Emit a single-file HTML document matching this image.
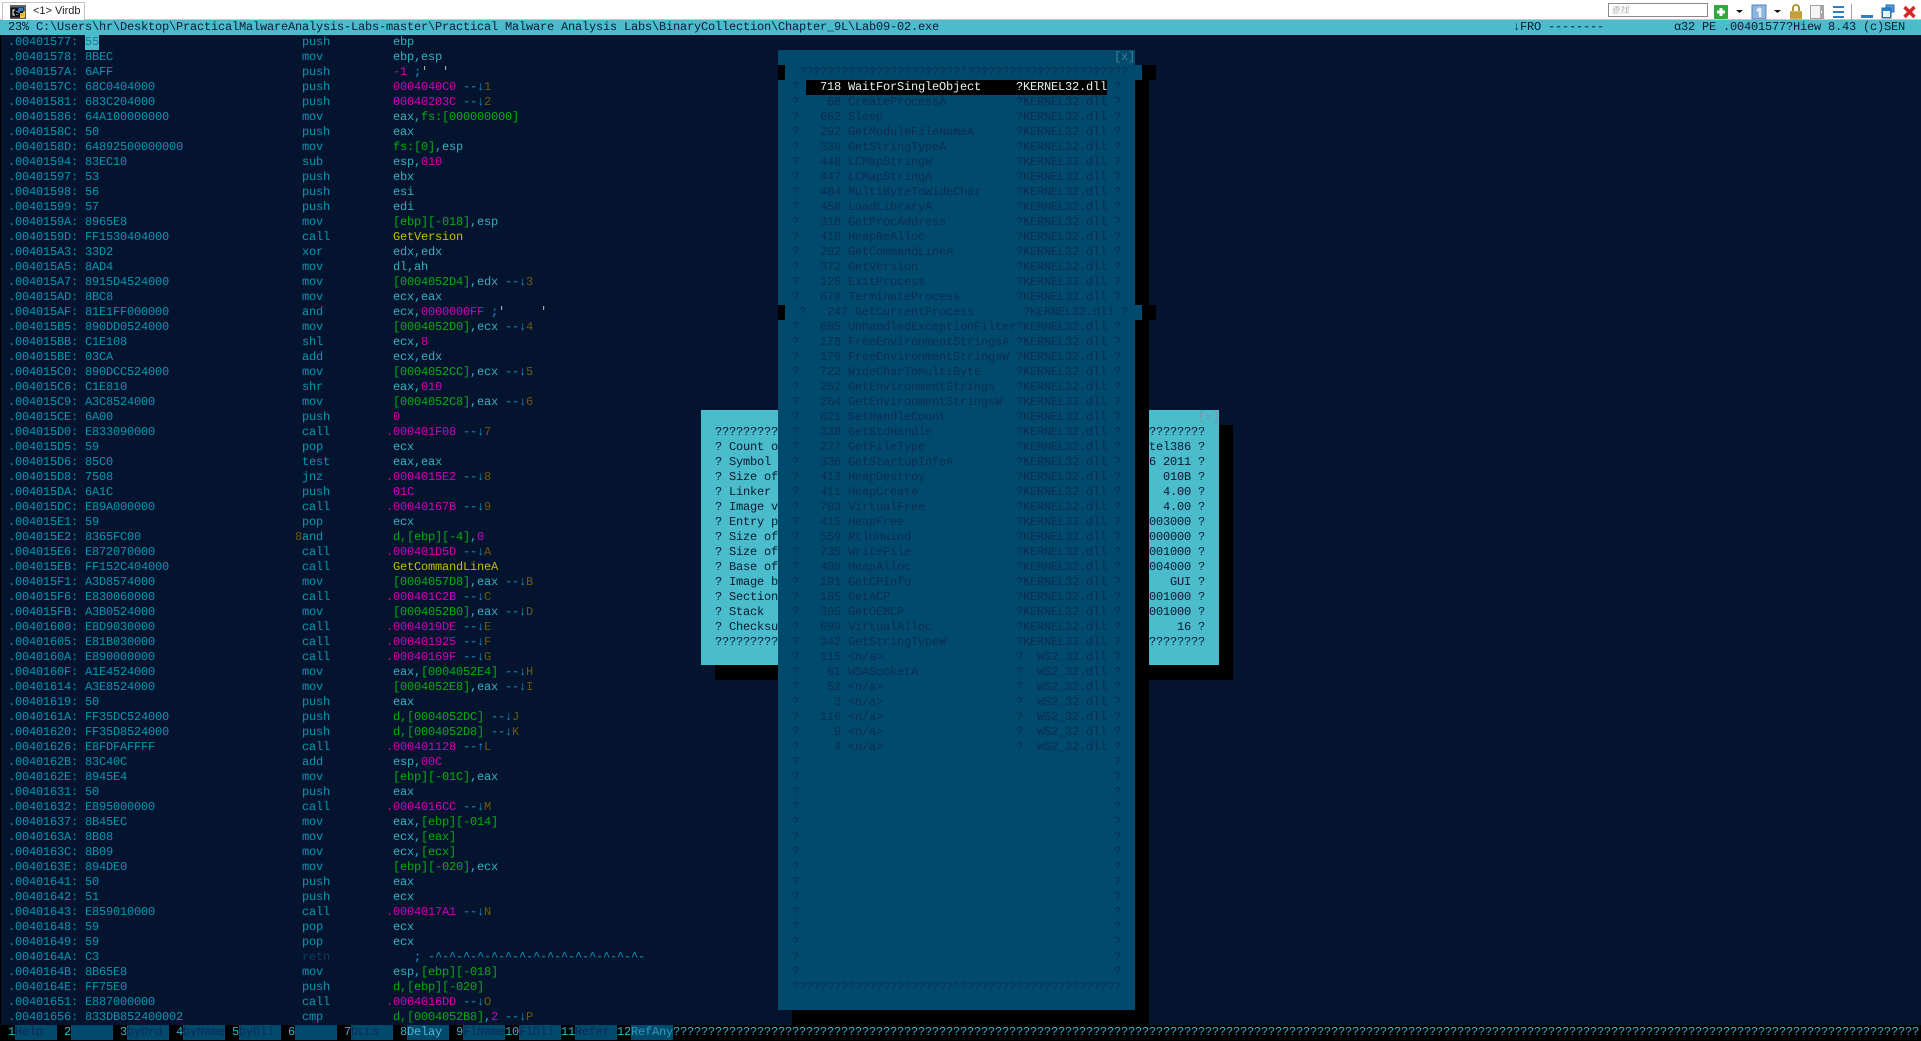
<!DOCTYPE html>
<html><head><meta charset="utf-8"><title>Virdb</title>
<style>
html,body{margin:0;padding:0;width:1921px;height:1041px;overflow:hidden;background:#05142e}
pre{position:absolute;margin:0;font:12px/15px "Liberation Mono","DejaVu Sans Mono",monospace;letter-spacing:-.2012px;text-rendering:geometricPrecision;font-kerning:none;white-space:pre}
.b{position:absolute}
.r{color:#35aebf}.g{color:#00ad10}.p{color:#cf00bd}.y{color:#c4bc00}.c{color:#0a9cc4}.o{color:#6b5a12}.q{color:#b8c0a8}.n{color:#e6f2f2}
</style></head><body>
<div class="b" style="left:0;top:0;width:1921px;height:20px;background:#fff"></div>
<div class="b" style="left:0;top:19px;width:1921px;height:1px;background:#c8c8c8"></div>
<div class="b" style="left:2px;top:2px;width:83px;height:18px;background:#fff;border:1px solid #c4c4c4;border-bottom:0;box-sizing:border-box"></div>
<svg class="b" style="left:10px;top:5px" width="17" height="15" viewBox="0 0 17 15"><rect x="0" y="0" width="16" height="14" fill="#5a6470"/><rect x="0.5" y="2.5" width="13" height="10" fill="#111"/><path d="M5 5H3v5h2M7 6v1M7 9v1" stroke="#fff" stroke-width="1" fill="none"/><path d="M9 3h4v3h-3v2H8V5a2 2 0 0 1 1-2z" fill="#3a78c8"/><path d="M15 6v5a2 2 0 0 1-2 2h-3v-3h3V7z" fill="#f2c93a"/><path d="M10 8h4v3h-4z" fill="#e8b82c"/></svg>
<div class="b" style="left:33px;top:4px;font:11px/14px 'Liberation Sans',sans-serif;color:#222">&lt;1&gt; Virdb</div>

<div class="b" style="left:1608px;top:3px;width:100px;height:14px;border:1px solid #8a8a8a;outline:0;box-sizing:border-box;background:#fff"></div>
<div class="b" style="left:1611px;top:4px;font:italic 9px/12px 'Liberation Sans','Noto Sans CJK SC',sans-serif;color:#b0b0b0">查找</div>
<svg class="b" style="left:1712px;top:3px" width="205" height="17" viewBox="0 0 205 17">
<rect x="2" y="2" width="14" height="14" rx="1" fill="#2fa83c"/><path d="M9 5v8M5 9h8" stroke="#fff" stroke-width="3"/>
<path d="M24 7h7l-3.500 3z" fill="#111"/>
<rect x="40" y="2" width="14" height="14" fill="#8fb6de" stroke="#4f86c0"/><path d="M48 5v9M45 8l3-3" stroke="#e8f2fb" stroke-width="2.500" fill="none"/>
<path d="M62 7h7l-3.500 3z" fill="#111"/>
<path d="M81 8V5a3 3 0 0 1 6 0v3" fill="none" stroke="#b09238" stroke-width="2"/><rect x="78" y="8" width="12" height="9" fill="#d9b04c"/><path d="M78 10h12M78 12h12M78 14h12" stroke="#b08a30"/>
<rect x="98.500" y="2.500" width="13" height="13" fill="#f4f4f4" stroke="#a0a0a0"/><rect x="108" y="3" width="3" height="12" fill="#a8a8a8"/><rect x="109" y="8" width="1" height="2" fill="#fff"/>
<path d="M121 4h11M121 9h11M121 14h11" stroke="#2a7fc8" stroke-width="2"/>
<path d="M139.500 1v16" stroke="#a0a0a0"/>
<rect x="149" y="12" width="12" height="3" fill="#2a7fc8"/>
<rect x="174" y="2" width="8" height="7" fill="#5a9ad8" stroke="#1f6cb0"/><rect x="170" y="5" width="9" height="10" fill="#2a7fc8" stroke="#1f6cb0"/><rect x="171" y="8" width="7" height="6" fill="#e8f2fb"/>
<path d="M192.500 4l10 10M202.500 4l-10 10" stroke="#d02a2a" stroke-width="3.500"/>
</svg>

<div class="b" style="left:0;top:20px;width:1921px;height:15px;background:#4bbccc"></div>
<pre style="left:1px;top:20px;color:#0a1c34"> 23% C:\Users\hr\Desktop\PracticalMalwareAnalysis-Labs-master\Practical Malware Analysis Labs\BinaryCollection\Chapter_9L\Lab09-02.exe</pre>
<pre style="left:1513px;top:20px;color:#0a1c34">↓FRO --------</pre>
<pre style="left:1674px;top:20px;color:#0a1c34">α32 PE .00401577?Hiew 8.43 (c)SEN</pre>

<div class="b" style="left:0;top:35px;width:1px;height:1006px;background:#000"></div>
<div class="b" style="left:85px;top:35px;width:14px;height:15px;background:#4bbccc"></div>

<pre style="left:1px;top:35px;color:#0496b2"> .00401577: <span style="color:#1c7f9b">55</span>
 .00401578: 8BEC
 .0040157A: 6AFF
 .0040157C: 68C0404000
 .00401581: 683C204000
 .00401586: 64A100000000
 .0040158C: 50
 .0040158D: 64892500000000
 .00401594: 83EC10
 .00401597: 53
 .00401598: 56
 .00401599: 57
 .0040159A: 8965E8
 .0040159D: FF1530404000
 .004015A3: 33D2
 .004015A5: 8AD4
 .004015A7: 8915D4524000
 .004015AD: 8BC8
 .004015AF: 81E1FF000000
 .004015B5: 890DD0524000
 .004015BB: C1E108
 .004015BE: 03CA
 .004015C0: 890DCC524000
 .004015C6: C1E810
 .004015C9: A3C8524000
 .004015CE: 6A00
 .004015D0: E833090000
 .004015D5: 59
 .004015D6: 85C0
 .004015D8: 7508
 .004015DA: 6A1C
 .004015DC: E89A000000
 .004015E1: 59
 .004015E2: 8365FC00
 .004015E6: E872070000
 .004015EB: FF152C404000
 .004015F1: A3D8574000
 .004015F6: E830060000
 .004015FB: A3B0524000
 .00401600: E8D9030000
 .00401605: E81B030000
 .0040160A: E890000000
 .0040160F: A1E4524000
 .00401614: A3E8524000
 .00401619: 50
 .0040161A: FF35DC524000
 .00401620: FF35D8524000
 .00401626: E8FDFAFFFF
 .0040162B: 83C40C
 .0040162E: 8945E4
 .00401631: 50
 .00401632: E895000000
 .00401637: 8B45EC
 .0040163A: 8B08
 .0040163C: 8B09
 .0040163E: 894DE0
 .00401641: 50
 .00401642: 51
 .00401643: E859010000
 .00401648: 59
 .00401649: 59
 .0040164A: C3
 .0040164B: 8B65E8
 .0040164E: FF75E0
 .00401651: E887000000
 .00401656: 833DB852400002</pre>

<pre style="left:295px;top:35px;color:#0496b2"> push
 mov
 push
 push
 push
 mov
 push
 mov
 sub
 push
 push
 push
 mov
 call
 xor
 mov
 mov
 mov
 and
 mov
 shl
 add
 mov
 shr
 mov
 push
 call
 pop
 test
 jnz
 push
 call
 pop
<span class="o">8</span>and
 call
 call
 mov
 call
 mov
 call
 call
 call
 mov
 mov
 push
 push
 push
 call
 add
 mov
 push
 call
 mov
 mov
 mov
 mov
 push
 push
 call
 pop
 pop
 <span style="color:#0b3d5c">retn</span>
 mov
 push
 call
 cmp</pre>

<pre class="r" style="left:386px;top:35px"> ebp
 ebp,esp
 <span class="p">-1</span> <span class="c">;</span><span class="q">'</span>  <span class="q">'</span>
 <span class="p">0004040C0</span> <span class="c">--↓</span><span class="o">1</span>
 <span class="p">00040203C</span> <span class="c">--↓</span><span class="o">2</span>
 eax,<span class="g">fs:[000000000]</span>
 eax
 <span class="g">fs:[0]</span>,esp
 esp,<span class="p">010</span>
 ebx
 esi
 edi
 <span class="g">[ebp][-018]</span>,esp
 <span class="y">GetVersion</span>
 edx,edx
 dl,ah
 <span class="g">[0004052D4]</span>,edx <span class="c">--↓</span><span class="o">3</span>
 ecx,eax
 ecx,<span class="p">0000000FF</span> <span class="c">;</span><span class="q">'</span>     <span class="q">'</span>
 <span class="g">[0004052D0]</span>,ecx <span class="c">--↓</span><span class="o">4</span>
 ecx,<span class="p">8</span>
 ecx,edx
 <span class="g">[0004052CC]</span>,ecx <span class="c">--↓</span><span class="o">5</span>
 eax,<span class="p">010</span>
 <span class="g">[0004052C8]</span>,eax <span class="c">--↓</span><span class="o">6</span>
 <span class="p">0</span>
<span class="p">.000401F08</span> <span class="c">--↓</span><span class="o">7</span>
 ecx
 eax,eax
<span class="p">.0004015E2</span> <span class="c">--↓</span><span class="o">8</span>
 <span class="p">01C</span>
<span class="p">.00040167B</span> <span class="c">--↓</span><span class="o">9</span>
 ecx
 <span class="g">d,[ebp][-4]</span>,<span class="p">0</span>
<span class="p">.000401D5D</span> <span class="c">--↓</span><span class="o">A</span>
 <span class="y">GetCommandLineA</span>
 <span class="g">[0004057D8]</span>,eax <span class="c">--↓</span><span class="o">B</span>
<span class="p">.000401C2B</span> <span class="c">--↓</span><span class="o">C</span>
 <span class="g">[0004052B0]</span>,eax <span class="c">--↓</span><span class="o">D</span>
<span class="p">.0004019DE</span> <span class="c">--↓</span><span class="o">E</span>
<span class="p">.000401925</span> <span class="c">--↓</span><span class="o">F</span>
<span class="p">.00040169F</span> <span class="c">--↓</span><span class="o">G</span>
 eax,<span class="g">[0004052E4]</span> <span class="c">--↓</span><span class="o">H</span>
 <span class="g">[0004052E8]</span>,eax <span class="c">--↓</span><span class="o">I</span>
 eax
 <span class="g">d,[0004052DC]</span> <span class="c">--↓</span><span class="o">J</span>
 <span class="g">d,[0004052D8]</span> <span class="c">--↓</span><span class="o">K</span>
<span class="p">.000401128</span> <span class="c">--↑</span><span class="o">L</span>
 esp,<span class="p">00C</span>
 <span class="g">[ebp][-01C]</span>,eax
 eax
<span class="p">.0004016CC</span> <span class="c">--↓</span><span class="o">M</span>
 eax,<span class="g">[ebp][-014]</span>
 ecx,<span class="g">[eax]</span>
 ecx,<span class="g">[ecx]</span>
 <span class="g">[ebp][-020]</span>,ecx
 eax
 ecx
<span class="p">.0004017A1</span> <span class="c">--↓</span><span class="o">N</span>
 ecx
 ecx
    <span class="c">; -^-^-^-^-^-^-^-^-^-^-^-^-^-^-^-</span>
 esp,<span class="g">[ebp][-018]</span>
 <span class="g">d,[ebp][-020]</span>
<span class="p">.0004016DD</span> <span class="c">--↓</span><span class="o">O</span>
 <span class="g">d,[0004052B8]</span>,<span class="p">2</span> <span class="c">--↓</span><span class="o">P</span></pre>

<div class="b" style="left:1219px;top:425px;width:14px;height:255px;background:#000"></div>
<div class="b" style="left:715px;top:665px;width:518px;height:15px;background:#000"></div>
<div class="b" style="left:701px;top:410px;width:518px;height:255px;background:#4bbccc"></div>
<pre style="left:1198px;top:410px;color:#6f9ea8">[x]</pre>
<pre style="left:715px;top:425px;color:#081a30">?????????
? Count o
? Symbol 
? Size of
? Linker 
? Image v
? Entry p
? Size of
? Size of
? Base of
? Image b
? Section
? Stack  
? Checksu
?????????</pre>
<pre style="left:1149px;top:425px;color:#081a30">????????
tel386 ?
6 2011 ?
  010B ?
  4.00 ?
  4.00 ?
003000 ?
000000 ?
001000 ?
004000 ?
   GUI ?
001000 ?
001000 ?
    16 ?
????????</pre>

<div class="b" style="left:1135px;top:80px;width:14px;height:945px;background:#000"></div>
<div class="b" style="left:792px;top:1010px;width:357px;height:15px;background:#000"></div>
<div class="b" style="left:778px;top:50px;width:357px;height:960px;background:#004a6e"></div>
<div class="b" style="left:778px;top:65px;width:7px;height:15px;background:#000"></div>
<div class="b" style="left:785px;top:65px;width:357px;height:15px;background:#004a6e"></div>
<div class="b" style="left:1142px;top:65px;width:14px;height:15px;background:#000"></div>
<div class="b" style="left:778px;top:305px;width:7px;height:15px;background:#000"></div>
<div class="b" style="left:785px;top:305px;width:357px;height:15px;background:#004a6e"></div>
<div class="b" style="left:1142px;top:305px;width:14px;height:15px;background:#000"></div>
<div class="b" style="left:806px;top:80px;width:301px;height:15px;background:#000"></div>
<pre style="left:778px;top:50px;color:#0d2c52">                                                <span style="color:#4a7c94">[x]</span>
   ???????????????????????*???????????????????????
  ?   <span class="n">718 WaitForSingleObject     ?KERNEL32.dll</span> ?
  ?    68 CreateProcessA          ?KERNEL32.dll ?
  ?   662 Sleep                   ?KERNEL32.dll ?
  ?   292 GetModuleFileNameA      ?KERNEL32.dll ?
  ?   339 GetStringTypeA          ?KERNEL32.dll ?
  ?   448 LCMapStringW            ?KERNEL32.dll ?
  ?   447 LCMapStringA            ?KERNEL32.dll ?
  ?   484 MultiByteToWideChar     ?KERNEL32.dll ?
  ?   450 LoadLibraryA            ?KERNEL32.dll ?
  ?   318 GetProcAddress          ?KERNEL32.dll ?
  ?   418 HeapReAlloc             ?KERNEL32.dll ?
  ?   202 GetCommandLineA         ?KERNEL32.dll ?
  ?   372 GetVersion              ?KERNEL32.dll ?
  ?   125 ExitProcess             ?KERNEL32.dll ?
  ?   670 TerminateProcess        ?KERNEL32.dll ?
   ?   247 GetCurrentProcess       ?KERNEL32.dll ?
  ?   685 UnhandledExceptionFilter?KERNEL32.dll ?
  ?   178 FreeEnvironmentStringsA ?KERNEL32.dll ?
  ?   179 FreeEnvironmentStringsW ?KERNEL32.dll ?
  ?   722 WideCharToMultiByte     ?KERNEL32.dll ?
  ?   252 GetEnvironmentStrings   ?KERNEL32.dll ?
  ?   264 GetEnvironmentStringsW  ?KERNEL32.dll ?
  ?   621 SetHandleCount          ?KERNEL32.dll ?
  ?   338 GetStdHandle            ?KERNEL32.dll ?
  ?   277 GetFileType             ?KERNEL32.dll ?
  ?   336 GetStartupInfoA         ?KERNEL32.dll ?
  ?   413 HeapDestroy             ?KERNEL32.dll ?
  ?   411 HeapCreate              ?KERNEL32.dll ?
  ?   703 VirtualFree             ?KERNEL32.dll ?
  ?   415 HeapFree                ?KERNEL32.dll ?
  ?   559 RtlUnwind               ?KERNEL32.dll ?
  ?   735 WriteFile               ?KERNEL32.dll ?
  ?   409 HeapAlloc               ?KERNEL32.dll ?
  ?   191 GetCPInfo               ?KERNEL32.dll ?
  ?   185 GetACP                  ?KERNEL32.dll ?
  ?   305 GetOEMCP                ?KERNEL32.dll ?
  ?   699 VirtualAlloc            ?KERNEL32.dll ?
  ?   342 GetStringTypeW          ?KERNEL32.dll ?
  ?   115 &lt;n/a&gt;                   ?  WS2_32.dll ?
  ?    61 WSASocketA              ?  WS2_32.dll ?
  ?    52 &lt;n/a&gt;                   ?  WS2_32.dll ?
  ?     3 &lt;n/a&gt;                   ?  WS2_32.dll ?
  ?   116 &lt;n/a&gt;                   ?  WS2_32.dll ?
  ?     9 &lt;n/a&gt;                   ?  WS2_32.dll ?
  ?     4 &lt;n/a&gt;                   ?  WS2_32.dll ?
  ?                                             ?
  ?                                             ?
  ?                                             ?
  ?                                             ?
  ?                                             ?
  ?                                             ?
  ?                                             ?
  ?                                             ?
  ?                                             ?
  ?                                             ?
  ?                                             ?
  ?                                             ?
  ?                                             ?
  ?                                             ?
  ?                                             ?
  ???????????????????????*???????????????????????</pre>

<div class="b" style="left:0;top:1025px;width:1921px;height:16px;background:#000"></div>
<div class="b" style="left:15px;top:1025px;width:42px;height:15px;background:#004a6e"></div>
<div class="b" style="left:71px;top:1025px;width:42px;height:15px;background:#004a6e"></div>
<div class="b" style="left:127px;top:1025px;width:42px;height:15px;background:#004a6e"></div>
<div class="b" style="left:183px;top:1025px;width:42px;height:15px;background:#004a6e"></div>
<div class="b" style="left:239px;top:1025px;width:42px;height:15px;background:#004a6e"></div>
<div class="b" style="left:295px;top:1025px;width:42px;height:15px;background:#004a6e"></div>
<div class="b" style="left:351px;top:1025px;width:42px;height:15px;background:#004a6e"></div>
<div class="b" style="left:407px;top:1025px;width:42px;height:15px;background:#004a6e"></div>
<div class="b" style="left:463px;top:1025px;width:42px;height:15px;background:#004a6e"></div>
<div class="b" style="left:519px;top:1025px;width:42px;height:15px;background:#004a6e"></div>
<div class="b" style="left:575px;top:1025px;width:42px;height:15px;background:#004a6e"></div>
<div class="b" style="left:631px;top:1025px;width:42px;height:15px;background:#004a6e"></div>
<pre style="left:1px;top:1025px;color:#2fb6d0"> 1<span style="color:#0d2c52">Help  </span> 2       3<span style="color:#0d2c52">byOrd </span> 4<span style="color:#0d2c52">byName</span> 5<span style="color:#0d2c52">byDll </span> 6       7<span style="color:#0d2c52">DLLs  </span> 8<span style="color:#4bbccc">Delay </span> 9<span style="color:#0d2c52">FlName</span>10<span style="color:#0d2c52">FlDll </span>11<span style="color:#0d2c52">Refer </span>12<span style="color:#2a9cb8">RefAny</span>??????????????????????????????????????????????????????????????????????????????????????????????????????????????????????????????????????????????????????????????????????????????????</pre>
</body></html>
